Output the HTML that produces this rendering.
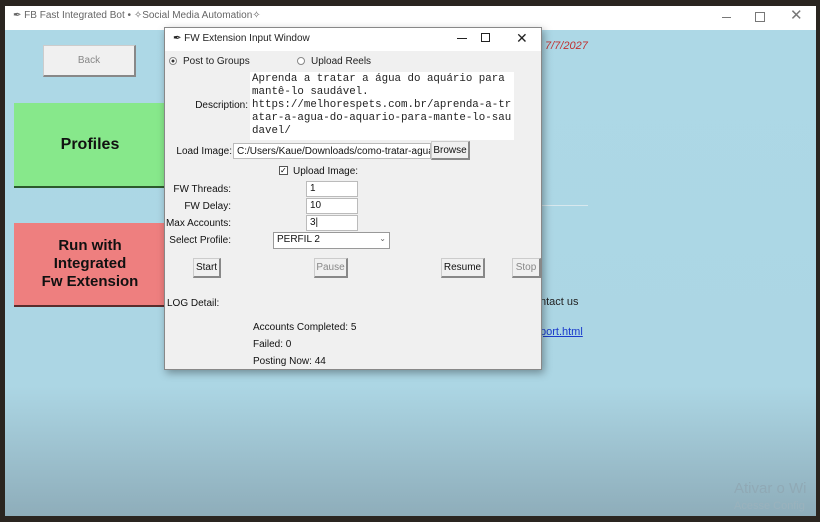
<!DOCTYPE html>
<html><head><meta charset="utf-8"><style>
*{margin:0;padding:0;box-sizing:border-box}
body{width:820px;height:522px;overflow:hidden;background:#2a2520;font-family:"Liberation Sans",sans-serif;position:relative}
.a{position:absolute}
.main{left:5px;top:6px;width:811px;height:510px;background:linear-gradient(#fff 0,#fff 24px,#add8e6 24px,#acd6e4 380px,#8eadba 510px)}
.t{font-size:11px;color:#222}
.btn{background:#f0f0f0;border:1px solid #ccc;border-right:2px solid #888;border-bottom:2px solid #888;font-size:10px;text-align:center;color:#333}
.dlg{left:164px;top:27px;width:378px;height:343px;background:#f0f0f0;border:1px solid #888;box-shadow:2px 3px 8px rgba(0,0,0,.35)}
.inp{background:#fff;border:1px solid #bbb;font-size:10px;padding:1px 3px;color:#111}
.lab{font-size:10px;color:#111;text-align:right}
.mono{font-family:"Liberation Mono",monospace;font-size:10.8px;line-height:13px;color:#222}
</style></head><body>
<div class="a main"></div>
<div class="a t" style="left:13px;top:10px;font-size:10px;color:#666">&#x2712; FB Fast Integrated Bot • ✧Social Media Automation✧</div>
<div class="a" style="left:722px;top:17px;width:9px;height:1px;background:#777"></div>
<div class="a" style="left:755px;top:12px;width:10px;height:10px;border:1px solid #777"></div>
<div class="a" style="left:790px;top:6px;font-size:15px;color:#777">✕</div>
<div class="a btn" style="left:43px;top:45px;width:93px;height:32px;line-height:30px;color:#888">Back</div>
<div class="a" style="left:14px;top:103px;width:152px;height:85px;background:#87e88b;border-bottom:2px solid #2d5a2d;font-weight:bold;font-size:16px;text-align:center;line-height:83px;color:#111">Profiles</div>
<div class="a" style="left:14px;top:223px;width:152px;height:84px;background:#ee7f7f;border-bottom:2px solid #5a2d2d;font-weight:bold;font-size:15px;text-align:center;line-height:18px;padding-top:14px;color:#111">Run with<br>Integrated<br>Fw Extension</div>
<div class="a" style="left:545px;top:40px;font-size:11px;color:#c03030;font-style:italic">7/7/2027</div>
<div class="a" style="left:540px;top:205px;width:48px;height:1px;background:#d8e8ee"></div>
<div class="a t" style="left:540px;top:296px;font-size:11px">ntact us</div>
<div class="a t" style="left:540px;top:326px;font-size:11px;color:#1a3acc;text-decoration:underline">port.html</div>
<div class="a" style="left:734px;top:480px;font-size:15px;color:#90a9b5">Ativar o Wi</div>
<div class="a" style="left:734px;top:500px;font-size:11px;color:#9ab2bd">Acesse Config</div>

<div class="a dlg">
<div class="a" style="left:0;top:0;width:376px;height:23px;background:#fff"></div>
<div class="a" style="left:8px;top:5px;font-size:10px;color:#222">&#x2712; FW Extension Input Window</div>
<div class="a" style="left:292px;top:10px;width:10px;height:1px;background:#222"></div>
<div class="a" style="left:316px;top:5px;width:9px;height:9px;border:1px solid #222"></div>
<div class="a" style="left:351px;top:2px;font-size:14px;color:#222">✕</div>
<div class="a" style="left:4px;top:29px;width:8px;height:8px;border-radius:50%;border:1px solid #888;background:radial-gradient(#333 30%,#fff 40%)"></div>
<div class="a t" style="left:18px;top:28px;font-size:10px">Post to Groups</div>
<div class="a" style="left:132px;top:29px;width:8px;height:8px;border-radius:50%;border:1px solid #888;background:#fff"></div>
<div class="a t" style="left:146px;top:28px;font-size:10px">Upload Reels</div>
<div class="a" style="left:85px;top:44px;width:264px;height:68px;background:#fff"></div>
<div class="a mono" style="left:87px;top:45px;white-space:pre">Aprenda a tratar a água do aquário para
mantê-lo saudável.
https://melhorespets.com.br/aprenda-a-tr
atar-a-agua-do-aquario-para-mante-lo-sau
davel/</div>
<div class="a lab" style="left:0;top:72px;width:83px">Description:</div>
<div class="a lab" style="left:0;top:118px;width:67px">Load Image:</div>
<div class="a inp" style="left:68px;top:115px;width:198px;height:16px;overflow:hidden;white-space:nowrap;padding-top:2px">C:/Users/Kaue/Downloads/como-tratar-agua</div>
<div class="a btn" style="left:266px;top:113px;width:39px;height:19px;line-height:17px;color:#111">Browse</div>
<div class="a" style="left:114px;top:138px;width:9px;height:9px;border:1px solid #555;background:#fff;font-size:8px;line-height:7px">✓</div>
<div class="a lab" style="left:128px;top:138px">Upload Image:</div>
<div class="a lab" style="left:0;top:156px;width:66px">FW Threads:</div>
<div class="a inp" style="left:141px;top:153px;width:52px;height:16px">1</div>
<div class="a lab" style="left:0;top:173px;width:66px">FW Delay:</div>
<div class="a inp" style="left:141px;top:170px;width:52px;height:16px">10</div>
<div class="a lab" style="left:0;top:190px;width:66px">Max Accounts:</div>
<div class="a inp" style="left:141px;top:187px;width:52px;height:16px">3|</div>
<div class="a lab" style="left:0;top:207px;width:66px">Select Profile:</div>
<div class="a inp" style="left:108px;top:204px;width:117px;height:17px;border-color:#999">PERFIL 2<span style="float:right;color:#666;font-size:8px">⌄</span></div>
<div class="a btn" style="left:28px;top:230px;width:28px;height:20px;line-height:18px;color:#111">Start</div>
<div class="a btn" style="left:149px;top:230px;width:34px;height:20px;line-height:18px;color:#888">Pause</div>
<div class="a btn" style="left:276px;top:230px;width:44px;height:20px;line-height:18px;color:#111">Resume</div>
<div class="a btn" style="left:347px;top:230px;width:29px;height:20px;line-height:18px;color:#888">Stop</div>
<div class="a lab" style="left:2px;top:270px">LOG Detail:</div>
<div class="a lab" style="left:88px;top:294px">Accounts Completed: 5</div>
<div class="a lab" style="left:88px;top:311px">Failed: 0</div>
<div class="a lab" style="left:88px;top:328px">Posting Now: 44</div>
</div>
</body></html>
